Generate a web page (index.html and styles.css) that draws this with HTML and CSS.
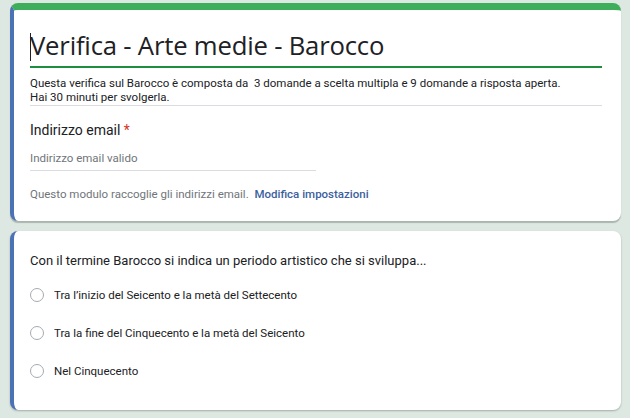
FILE: index.html
```html
<!DOCTYPE html>
<html lang="it">
<head>
<meta charset="utf-8">
<title>Verifica - Arte medie - Barocco</title>
<link rel="stylesheet" href="styles.css">
</head>
<body>
<main class="page">
  <section class="card card-head">
    <div class="title-wrap">
      <h1 class="title"><span class="caret"></span>Verifica - Arte medie - Barocco</h1>
    </div>
    <p class="desc">Questa verifica sul Barocco è composta da&nbsp; 3 domande a scelta multipla e 9 domande a risposta aperta.<br>Hai 30 minuti per svolgerla.</p>
    <div class="email">
      <div class="label">Indirizzo email <span class="req">*</span></div>
      <div class="input">Indirizzo email valido</div>
      <div class="note">Questo modulo raccoglie gli indirizzi email.&nbsp; <a class="link">Modifica impostazioni</a></div>
    </div>
  </section>
  <section class="card card-q">
    <div class="question">Con il termine Barocco si indica un periodo artistico che si sviluppa...</div>
    <ul class="options">
      <li class="option"><span class="radio"></span>Tra l’inizio del Seicento e la metà del Settecento</li>
      <li class="option"><span class="radio"></span>Tra la fine del Cinquecento e la metà del Seicento</li>
      <li class="option"><span class="radio"></span>Nel Cinquecento</li>
    </ul>
  </section>
</main>
</body>
</html>
```

FILE: styles.css
```css
* { box-sizing: border-box; }
html, body { margin: 0; padding: 0; }
body {
  background: #dce8e1;
  font-family: Roboto, "Liberation Sans", Arial, sans-serif;
  color: #202124;
  width: 630px;
  height: 418px;
  overflow: hidden;
}
.page {
  padding: 3px 9px 0 10px;
  display: flex;
  flex-direction: column;
  gap: 10px;
}
.card {
  background: #fff;
  border-left: 4px solid #4a72b4;
  border-radius: 8px;
  box-shadow: 0 1px 2px rgba(0,0,0,0.25);
  padding-left: 16px;
  padding-right: 19px;
}
.card-head {
  border-top: 7px solid #3fae5a;
  height: 218px;
  box-shadow: 0 2px 1px rgba(0,0,0,0.22);
}
.title-wrap {
  padding-top: 19px;
  border-bottom: 2px solid #1e8e3e;
  padding-bottom: 4px;
}
.title {
  margin: 0;
  font-family: "Open Sans", Roboto, sans-serif;
  font-weight: 400;
  font-size: 25.7px;
  line-height: 33px;
  color: #202124;
  letter-spacing: -0.2px;
}
.caret {
  display: inline-block;
  width: 1px;
  height: 28px;
  background: #202124;
  vertical-align: -6px;
  margin-right: -1px;
}
.desc {
  margin: 8px 0 0;
  font-size: 11.5px;
  line-height: 14px;
  padding-bottom: 1px;
  border-bottom: 1px solid #dadce0;
  color: #202124;
}
.email { padding-top: 14px; }
.label {
  font-size: 14px;
  line-height: 20px;
}
.req { color: #d93025; }
.input {
  margin-top: 10px;
  width: 286px;
  font-size: 11.5px;
  line-height: 16px;
  color: #70757a;
  padding-bottom: 4px;
  border-bottom: 1px solid #dadce0;
}
.note {
  margin-top: 15px;
  font-size: 11.5px;
  line-height: 16px;
  color: #70757a;
}
.link { color: #3c5f9e; font-weight: 500; }
.card-q {
  height: 179px;
  padding-top: 21px;
}
.question {
  font-size: 13px;
  line-height: 18px;
}
.options {
  list-style: none;
  margin: 17px 0 0;
  padding: 0;
  display: flex;
  flex-direction: column;
  gap: 22px;
}
.option {
  display: flex;
  align-items: center;
  gap: 10px;
  font-size: 11.5px;
  line-height: 16px;
  height: 16px;
}
.radio {
  width: 14px;
  height: 14px;
  border: 1.5px solid #a6abb0;
  border-radius: 50%;
  flex: none;
}
```
